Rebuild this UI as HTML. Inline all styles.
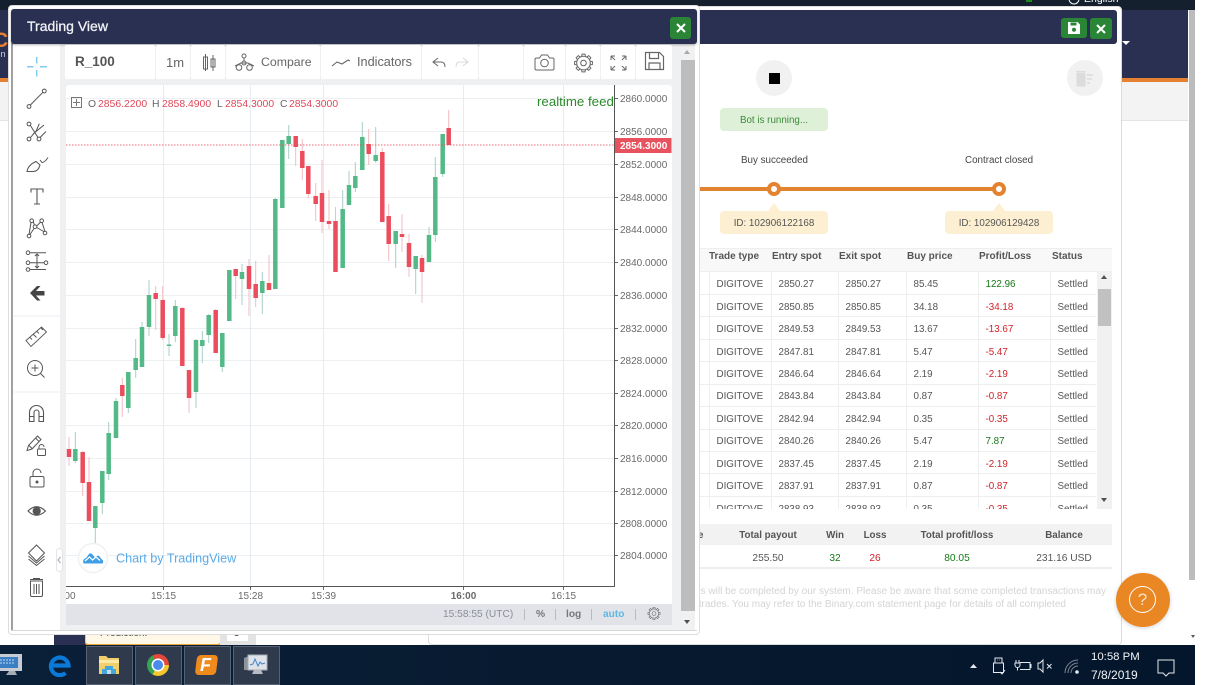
<!DOCTYPE html>
<html><head><meta charset="utf-8"><title>Trading View</title>
<style>
html,body{margin:0;padding:0;width:1219px;height:685px;overflow:hidden;background:#fff;font-family:"Liberation Sans",Arial,sans-serif}
#w{position:absolute;left:0;top:0;width:1219px;height:685px;overflow:hidden;filter:blur(.3px)}
.a{position:absolute}
.t{position:absolute;white-space:nowrap}
table{border-collapse:collapse;table-layout:fixed}
#tb td{height:22.45px;padding:3px 0 0 7px;font-size:9.8px;color:#555;border-bottom:1px solid #eee;border-right:1px solid #eee;box-sizing:border-box;white-space:nowrap;overflow:hidden}
#tb td.g,.g{color:#167a16}
#tb td.r,.r{color:#d0222a}
.seg{position:absolute;top:45px;height:34px;background:#fff;border-radius:2px}
.hd{position:absolute;top:251px;font-size:10px;font-weight:bold;color:#555;line-height:12px;white-space:nowrap}
.sm{position:absolute;font-size:10.2px;line-height:12px;white-space:nowrap;transform:translateX(-50%)}
.tk{position:absolute;top:646px;height:37px;width:45px;background:#2f3b4d;border:1px solid #566274}
</style></head><body><div id="w">

<!-- background page -->
<div class="a" style="left:0;top:0;width:1195px;height:10px;background:#14202e"></div>
<div class="a" style="left:0;top:10px;width:1188px;height:68px;background:#2a3052"></div>
<div class="a" style="left:0;top:78px;width:1188px;height:4px;background:#e58130"></div>
<div class="a" style="left:0;top:82px;width:1188px;height:38px;background:#f3f3f3;border-bottom:1px solid #e4e4e4"></div>
<div class="t" style="left:-7px;top:29px;font-size:21px;font-weight:bold;color:#e58130">C</div>
<div class="t" style="left:-6px;top:49px;font-size:9px;color:#cfd2dc">sin</div>
<div class="a" style="left:1189px;top:10px;width:6px;height:570px;background:#bcbcbc"></div>
<div class="a" style="left:1190.5px;top:635px;border-left:2.5px solid transparent;border-right:2.5px solid transparent;border-top:3px solid #555"></div>
<div class="a" style="left:1122px;top:41px;border-left:4px solid transparent;border-right:4px solid transparent;border-top:4px solid #fff"></div>
<div class="a" style="left:1026px;top:0;width:6px;height:2px;background:#1a8a1a"></div>
<svg class="a" style="left:1067px;top:0" width="14" height="5"><circle cx="7" cy="-1" r="5" fill="none" stroke="#fff"/></svg>
<div class="t" style="left:1084px;top:-7px;font-size:10.5px;color:#fff">English</div>

<!-- remnants under windows -->
<div class="a" style="left:54px;top:630px;width:32px;height:16px;background:#2a3052"></div>
<div class="a" style="left:85px;top:628px;width:134px;height:15px;background:#fff8e6;border:1px solid #f4c65c;border-bottom:2px solid #e7a53a;border-radius:0 0 4px 4px"></div>
<div class="t" style="left:100px;top:628px;font-size:10px;color:#444">Prediction:</div>
<div class="a" style="left:220px;top:628px;width:36px;height:17px;background:#e3e3e3"></div>
<div class="a" style="left:227px;top:628px;width:21px;height:13px;background:#fff"></div>
<div class="t" style="left:234px;top:628px;font-size:10px;color:#444">5</div>

<!-- BOT WINDOW -->
<div class="a" style="left:428px;top:6px;width:692px;height:637px;background:#fff;border:1px solid #dcdcdc;border-radius:4px"></div>
<div class="a" style="left:432px;top:10px;width:685px;height:34px;background:#2a3052;border-radius:3px"></div>
<div class="a" style="left:1061px;top:18px;width:26px;height:20px;background:#2a8636;border-radius:3px"></div>
<svg class="a" style="left:1067px;top:21px" width="14" height="14" viewBox="0 0 14 14"><path d="M1 1h9.500l2.500 2.500V13H1z" fill="#fff"/><rect x="3.500" y="1.500" width="6" height="3" fill="#2a8636"/><circle cx="7" cy="8.800" r="2" fill="#2a8636"/></svg>
<div class="a" style="left:1090px;top:18px;width:22px;height:21px;background:#2a8636;border-radius:3px"></div>
<svg class="a" style="left:1095px;top:23px" width="12" height="12"><path d="M2 2l8 8M10 2l-8 8" stroke="#fff" stroke-width="2"/></svg>

<div class="a" style="left:756px;top:60px;width:36px;height:36px;border-radius:50%;background:#f1f1f1"></div>
<div class="a" style="left:769px;top:73px;width:10.500px;height:11px;background:#000"></div>
<div class="a" style="left:1067px;top:60px;width:36px;height:36px;border-radius:50%;background:#f1f1f1"></div>
<svg class="a" style="left:1075px;top:70px" width="20" height="17"><path d="M2 3h8v13H2z M1 1.500h10" fill="#dcdcdc" stroke="#dcdcdc"/><path d="M12 5h6M12 9h5M12 13h3" stroke="#dcdcdc" stroke-width="1.500"/></svg>

<div class="a" style="left:720px;top:108px;width:108px;height:23px;background:#dff0d8;border-radius:4px;text-align:center;font-size:9.800px;line-height:25px;color:#3c8a3d">Bot is running...</div>
<div class="t" style="left:741px;top:155px;font-size:9.800px;line-height:12px;color:#444">Buy succeeded</div>
<div class="t" style="left:965px;top:155px;font-size:9.800px;line-height:12px;color:#444">Contract closed</div>
<div class="a" style="left:699px;top:187px;width:300px;height:4px;background:#e38330"></div>
<div class="a" style="left:767px;top:182px;width:6px;height:6px;border:4px solid #e38330;background:#fff;border-radius:50%"></div>
<div class="a" style="left:992px;top:182px;width:6px;height:6px;border:4px solid #e38330;background:#fff;border-radius:50%"></div>
<div class="a" style="left:720px;top:211px;width:108px;height:23px;background:#fdf0d2;border-radius:4px;text-align:center;font-size:9.800px;line-height:25px;color:#555">ID: 102906122168</div>
<div class="a" style="left:945px;top:211px;width:108px;height:23px;background:#fdf0d2;border-radius:4px;text-align:center;font-size:9.800px;line-height:25px;color:#555">ID: 102906129428</div>
<div class="a" style="left:768px;top:203px;border-left:6px solid transparent;border-right:6px solid transparent;border-bottom:8px solid #fdf0d2"></div>
<div class="a" style="left:993px;top:203px;border-left:6px solid transparent;border-right:6px solid transparent;border-bottom:8px solid #fdf0d2"></div>

<!-- trades table -->
<div class="a" style="left:697px;top:248px;width:415px;height:24px;background:#f8f8f8;border-bottom:1px solid #eee;border-top:1px solid #eee;box-sizing:border-box"></div>
<div class="hd" style="left:709px">Trade type</div>
<div class="hd" style="left:772px">Entry spot</div>
<div class="hd" style="left:839px">Exit spot</div>
<div class="hd" style="left:907px">Buy price</div>
<div class="hd" style="left:979px">Profit/Loss</div>
<div class="hd" style="left:1052px">Status</div>
<div class="a" style="left:697px;top:272px;width:399px;height:237px;overflow:hidden">
<table id="tb" style="width:399px">
<colgroup><col style="width:12px"><col style="width:62px"><col style="width:67px"><col style="width:68px"><col style="width:72px"><col style="width:72px"><col style="width:46px"></colgroup>
<tr><td></td><td>DIGITOVE</td><td>2850.27</td><td>2850.27</td><td>85.45</td><td class="g">122.96</td><td>Settled</td></tr>
<tr><td></td><td>DIGITOVE</td><td>2850.85</td><td>2850.85</td><td>34.18</td><td class="r">-34.18</td><td>Settled</td></tr>
<tr><td></td><td>DIGITOVE</td><td>2849.53</td><td>2849.53</td><td>13.67</td><td class="r">-13.67</td><td>Settled</td></tr>
<tr><td></td><td>DIGITOVE</td><td>2847.81</td><td>2847.81</td><td>5.47</td><td class="r">-5.47</td><td>Settled</td></tr>
<tr><td></td><td>DIGITOVE</td><td>2846.64</td><td>2846.64</td><td>2.19</td><td class="r">-2.19</td><td>Settled</td></tr>
<tr><td></td><td>DIGITOVE</td><td>2843.84</td><td>2843.84</td><td>0.87</td><td class="r">-0.87</td><td>Settled</td></tr>
<tr><td></td><td>DIGITOVE</td><td>2842.94</td><td>2842.94</td><td>0.35</td><td class="r">-0.35</td><td>Settled</td></tr>
<tr><td></td><td>DIGITOVE</td><td>2840.26</td><td>2840.26</td><td>5.47</td><td class="g">7.87</td><td>Settled</td></tr>
<tr><td></td><td>DIGITOVE</td><td>2837.45</td><td>2837.45</td><td>2.19</td><td class="r">-2.19</td><td>Settled</td></tr>
<tr><td></td><td>DIGITOVE</td><td>2837.91</td><td>2837.91</td><td>0.87</td><td class="r">-0.87</td><td>Settled</td></tr>
<tr><td></td><td>DIGITOVE</td><td>2838.93</td><td>2838.93</td><td>0.35</td><td class="r">-0.35</td><td>Settled</td></tr>
</table></div>
<div class="a" style="left:1097px;top:271px;width:15px;height:238px;background:#f1f1f1"></div>
<div class="a" style="left:1098px;top:289px;width:13px;height:37px;background:#c1c1c1"></div>
<div class="a" style="left:1101px;top:275px;border-left:3.500px solid transparent;border-right:3.500px solid transparent;border-bottom:4px solid #505050"></div>
<div class="a" style="left:1101px;top:498px;border-left:3.500px solid transparent;border-right:3.500px solid transparent;border-top:4px solid #505050"></div>

<!-- summary -->
<div class="a" style="left:697px;top:524px;width:415px;height:21px;background:#f2f2f2"></div>
<div class="a" style="left:697px;top:545px;width:415px;height:24px;border-bottom:2px solid #eee;box-sizing:border-box"></div>
<div class="sm" style="left:768px;top:530px;font-weight:bold;color:#555;font-size:9.800px">Total payout</div>
<div class="sm" style="left:835px;top:530px;font-weight:bold;color:#555;font-size:9.800px">Win</div>
<div class="sm" style="left:875px;top:530px;font-weight:bold;color:#555;font-size:9.800px">Loss</div>
<div class="sm" style="left:957px;top:530px;font-weight:bold;color:#555;font-size:9.800px">Total profit/loss</div>
<div class="sm" style="left:1064px;top:530px;font-weight:bold;color:#555;font-size:9.800px">Balance</div>
<div class="t" style="left:698px;top:530px;font-size:9.800px;line-height:12px;font-weight:bold;color:#555">e</div>
<div class="sm" style="left:768px;top:553px;color:#555">255.50</div>
<div class="sm g" style="left:835px;top:553px">32</div>
<div class="sm r" style="left:875px;top:553px">26</div>
<div class="sm g" style="left:957px;top:553px">80.05</div>
<div class="sm" style="left:1064px;top:553px;color:#555">231.16 USD</div>

<div class="a" style="left:699px;top:585px;width:412px;height:28px;overflow:hidden">
<div class="t" style="right:5px;top:1px;font-size:10.050px;line-height:12px;color:#d4d4d4">All trades will be completed by our system. Please be aware that some completed transactions may</div>
<div class="t" style="right:45px;top:14px;font-size:10.050px;line-height:12px;color:#d4d4d4">outstanding trades. You may refer to the Binary.com statement page for details of all completed</div>
</div>

<!-- help -->
<div class="a" style="left:1116px;top:573px;width:54px;height:54px;border-radius:50%;background:#e98724;box-shadow:0 1px 4px rgba(0,0,0,.18)"></div>
<div class="a" style="left:1129px;top:586px;width:25px;height:25px;border:1.500px solid #fff;border-radius:50%;color:#f8e2c8;text-align:center;font-size:17px;line-height:25px">?</div>

<!-- TRADING WINDOW -->
<div class="a" style="left:8px;top:5px;width:690px;height:628px;background:#fff;border:1px solid #ddd;border-radius:4px"></div>
<div class="a" style="left:11px;top:43px;width:2px;height:588px;background:#a0a0a0"></div>
<div class="a" style="left:11px;top:630px;width:686px;height:1px;background:#d8d8d8"></div>
<div class="a" style="left:60px;top:44px;width:621px;height:586px;background:#eff0f2"></div>
<div class="a" style="left:681px;top:44px;width:14px;height:586px;background:#f1f1f1"></div>
<div class="a" style="left:681px;top:60px;width:13.500px;height:551px;background:#bdbdbd"></div>
<div class="a" style="left:684px;top:50px;border-left:3.500px solid transparent;border-right:3.500px solid transparent;border-bottom:4px solid #a8a8a8"></div>
<div class="a" style="left:684px;top:620px;border-left:3.500px solid transparent;border-right:3.500px solid transparent;border-top:4px solid #505050"></div>

<div class="a" style="left:11px;top:9px;width:686px;height:34.500px;background:#2a3052;border-radius:3px 3px 3px 3px;box-shadow:0 1px 2px rgba(0,0,0,.3)"></div>
<div class="t" style="left:27px;top:18px;font-size:14px;line-height:17px;color:#f0f1f5;-webkit-text-stroke:.3px #f0f1f5">Trading View</div>
<div class="a" style="left:670px;top:17px;width:21px;height:22px;background:#2a8636;border-radius:3px"></div>
<svg class="a" style="left:675px;top:22px" width="12" height="12"><path d="M2 2l8 8M10 2l-8 8" stroke="#fff" stroke-width="2"/></svg>

<!-- top toolbar -->
<div class="seg" style="left:65px;width:90px"></div>
<div class="seg" style="left:156px;width:34px"></div>
<div class="seg" style="left:191px;width:34px"></div>
<div class="seg" style="left:226px;width:94px"></div>
<div class="seg" style="left:321px;width:100px"></div>
<div class="seg" style="left:422px;width:56px"></div>
<div class="seg" style="left:479px;width:44px"></div>
<div class="seg" style="left:524px;width:41px"></div>
<div class="seg" style="left:566px;width:34px"></div>
<div class="seg" style="left:601px;width:34px"></div>
<div class="seg" style="left:636px;width:36px"></div>
<div class="t" style="left:75px;top:54px;font-size:13.500px;line-height:16px;font-weight:bold;color:#555">R_100</div>
<div class="t" style="left:166px;top:55px;font-size:13px;line-height:16px;color:#666">1m</div>
<div class="t" style="left:261px;top:55px;font-size:12.300px;line-height:15px;color:#666">Compare</div>
<div class="t" style="left:357px;top:55px;font-size:12.700px;line-height:15px;color:#666">Indicators</div>
<svg class="a" style="left:0;top:0" width="700" height="85" fill="none" stroke="#666" stroke-width="1">
<defs><g id="gr"><circle r="6.800"/><g id="th"><path d="M6.700-1.900L8.900-1.500V1.500L6.700 1.900"/></g><use href="#th" transform="rotate(45)"/><use href="#th" transform="rotate(90)"/><use href="#th" transform="rotate(135)"/><use href="#th" transform="rotate(180)"/><use href="#th" transform="rotate(225)"/><use href="#th" transform="rotate(270)"/><use href="#th" transform="rotate(315)"/><circle r="2.800"/></g></defs>
<path d="M205.500 54v17M203.500 57h4v12h-4zM213 55v16M211 59h4v8h-4z"/>
<circle cx="244" cy="56" r="2"/><circle cx="244" cy="63" r="2"/><circle cx="239" cy="67.500" r="2.800"/><circle cx="249.500" cy="67.500" r="2.800"/><path d="M244 58v3M235 66l6-3h7l6 3"/>
<path d="M332 66l5-4 5 2 6-4 2 1" stroke-width="1.100"/>
<path d="M438 58l-5 4 5 4M433 62h8c3 0 4 2 4 5"/>
<path d="M463 58l5 4-5 4M468 62h-8c-3 0-4 2-4 5" stroke="#d6d8db"/>
<path d="M536.500 58h3l2-3h6l2 3h3a1.500 1.500 0 0 1 1.500 1.500v9a1.500 1.500 0 0 1-1.500 1.500h-16a1.500 1.500 0 0 1-1.500-1.500v-9a1.500 1.500 0 0 1 1.500-1.500z"/><circle cx="544.500" cy="63" r="3.800"/>
<use href="#gr" transform="translate(583.500 63)"/>
<path d="M611 56h4M611 56v4M611 56l4 4M626 56h-4M626 56v4M626 56l-4 4M611 70h4M611 70v-4M611 70l4-4M626 70h-4M626 70v-4M626 70l-4-4"/>
<path d="M645.500 52.500h14l4 4v13h-18zM649.500 52.500v6h9v-6M649 69.500v-6.500h11v6.500" stroke-width="1.200"/>
</svg>

<!-- left toolbar -->
<svg class="a" style="left:0;top:0" width="66" height="630" fill="none" stroke="#555" stroke-width="1">
<path d="M14 316h46M14 392h46" stroke="#eceef0"/>
<path d="M36.700 57v6.500M36.700 70v6.500M27 66.700h6.500M40 66.700h7" stroke="#7ecbee" stroke-width="1.500"/>
<circle cx="29" cy="106.500" r="1.900"/><circle cx="44.300" cy="91" r="1.900"/><path d="M30.400 105l12.500-12.700"/>
<circle cx="29" cy="139" r="1.900"/><circle cx="39" cy="139" r="1.900"/><circle cx="29" cy="124" r="1.900"/><path d="M30.400 125.500L38 137.500M30.300 137.700l6-7 3-7M33 134l11-9M40 137.500l6-6"/>
<path d="M27 171.500c.5-4 4-8 9-10l4 3.500c-1 4-3 6.500-7 6.500zM40 160l2 2.500c2 0 4-2 6-5"/>
<path d="M31 192.500v-3.500h12v3.500M37 189v15M34 204h6" stroke-width="1.100"/>
<circle cx="31.700" cy="220.700" r="1.800"/><circle cx="41.700" cy="220.700" r="1.800"/><circle cx="29" cy="236" r="1.800"/><circle cx="45" cy="233" r="1.800"/><circle cx="35" cy="226.700" r="1.800"/>
<path d="M31 222.500l-2 12M33 221.500l1.500 3.500M36.700 226l4-4M36.700 227.500l7 4M42 222.500l3 9M30 234.500l4-6"/>
<circle cx="28" cy="252.700" r="1.800"/><circle cx="28" cy="262.700" r="1.800"/><circle cx="46" cy="262.700" r="1.800"/><circle cx="28" cy="269.500" r="1.800"/>
<path d="M30 252.700h16M30 262.700h14M30 269.500h16M37 254v14M35 256l2-2 2 2M35 266l2 2 2-2"/>
<path d="M30 293l7-7h3.500l-4.500 5h8.500v4.500H36l4.500 5H37z" fill="#444" stroke="none"/>
<path d="M26 340.500L41.500 327l5 5L31 346.500zM30 337.500l2 2M33.500 334.500l3 3M37 331.500l2 2M41 328l2 2" stroke-width=".9"/>
<circle cx="35" cy="368" r="7.500"/><path d="M40.500 373.500l4 4M31.500 368h7M35 364.500v7"/>
<path d="M29.500 421.500v-9a7 7 0 0 1 14 0v9h-4.500v-9a2.500 2.500 0 0 0-5 0v9zM29.500 416.500h4.500M39 416.500h4.500" stroke-width="1.100"/>
<path d="M27 450.500l1.500-5 9-9.500 3.500 3.500-9 9.500zM35.500 438l3.500 3.500M29 445.500l3 3"/><rect x="37.500" y="449" width="8" height="6.500" rx="1"/><path d="M39 449v-2a2.500 2.500 0 0 1 5 0"/>
<rect x="30" y="476.500" width="14" height="10.500" rx="1.500"/><path d="M33 476.500V473a4 4 0 0 1 8 0"/><circle cx="37" cy="482" r="1" fill="#555"/>
<path d="M28 511q8.500-8.500 17.500 0q-9 8.500-17.500 0z" stroke-width="1.100"/><circle cx="36.700" cy="511" r="3.600" fill="#555"/>
<path d="M28.500 553l8-8 8 8-8 8zM28.500 556l8 7 8-7M28.500 559l8 6.500 8-6.500" stroke-width="1"/>
<path d="M30.500 581h12v14a1.500 1.500 0 0 1-1.500 1.500h-9a1.500 1.500 0 0 1-1.500-1.500zM30 579.500h13M33 578.500h7M34 584v10M36.500 584v10M39 584v10" stroke-width="1"/>
</svg>
<div class="a" style="left:56px;top:548px;width:7px;height:24px;background:#fff;border:1px solid #e3e5e8;border-radius:4px;box-sizing:border-box"></div>
<svg class="a" style="left:57px;top:556px" width="5" height="8"><path d="M3.500 1L1 4l2.500 3" fill="none" stroke="#aaa"/></svg>

<!-- chart -->
<div class="a" style="left:66px;top:85px;width:606px;height:519px;background:#fff;border-radius:3px 3px 0 0"></div>
<svg class="a" style="left:66px;top:85px" width="606" height="519" viewBox="66 85 606 519" font-family="Liberation Sans,Arial,sans-serif">
<g stroke="#ecf0f3" stroke-width="1" fill="none">
<path d="M66 98.500H614M66 131.500H614M66 164.500H614M66 197.500H614M66 229.500H614M66 262.500H614M66 295.500H614M66 328.500H614M66 360.500H614M66 393.500H614M66 425.500H614M66 458.500H614M66 491.500H614M66 523.500H614M66 555.500H614"/>
<path d="M163.500 85V586M250.500 85V586M323.500 85V586M463.500 85V586M563.500 85V586" stroke="#e6edf2"/>
</g>
<path fill="none" stroke-width="1" stroke="#f2bcc2" d="M69 437V466M82.700 451V496M89 457V521M122.300 378V417M155.700 286V330M162.700 286V340M182.300 307V366M189 370V413M215.700 309V353M235.700 269V299M249 259V316M255.700 261V307M269 255V290M295.700 136V166M302.300 139V180M308.300 166V198M315.700 183V221M322 160V233M329 190V229M335.500 207V272M368.700 129V165M382.300 148V222M388.700 204V261M402 214V252M409 234V277M422 255V303M448.700 110V145"/>
<path fill="none" stroke-width="1" stroke="#a9cfc6" d="M75.300 432V463M95.300 506V544M102.300 471V514M108.700 422V480M116 398V438M128.300 372V413M135.700 339V378M142 322V367M149 280V336M169 334V356M175.300 300V342M196 339V408M202.300 331V363M208.700 314V343M222.300 333V372M242 264V305M262.300 272V314M275.300 198V289M288.700 125V159M342.700 190V268M349 171V205M355.300 162V192M362.300 122V170M375.700 127V163M395.700 231V268M415.700 256V294M429 227V262M435.300 157V242M442.700 134V177"/>
<path fill="none" stroke="#53b987" stroke-width="4.500" d="M75.300 449V461M95.300 506V528M102.300 471V503M108.700 433V474M116 401V438M128.300 372V408M135.700 358V370M142 327V367M149 295V327M175.300 306V336M196 340V392M202.300 340V346M208.700 315V335M222.300 333V367M229.300 270V321M242 272V279M262.300 281V293M275.300 199V289M282.300 140V208M288.700 136V144M342.700 209V268M349 185V205M355.300 176V188M362.300 137V170M375.700 155V161M395.700 231V244M415.700 256V269M429 235V262M435.300 177V235M442.700 134V174"/>
<path fill="none" stroke="#53b987" stroke-width="4.500" d="M169 344.500V346"/>
<path fill="none" stroke="#eb4d5c" stroke-width="4.500" d="M69 449V457M82.700 452V483M89 482V521M122.300 385V396M155.700 293V299M162.700 300V338M182.300 308V366M189 370V398M215.700 310V353M235.700 269V276M249 266V289M255.700 284V298M269 283V290M295.700 136V147M302.300 151V168M308.300 166V194M315.700 196V204M322 193V222M329 221V224M335.500 221V272M368.700 144V154M382.300 152V222M388.700 216V244M402 234V237M409 243V267M422 258V272M448.700 128V145"/>
<path d="M66 145H614" stroke="#eb4d5c" stroke-width="1" stroke-dasharray="1.500 1.500" fill="none" opacity=".85"/>
<!-- axes -->
<path d="M614.500 85V586.500H66" stroke="#555" stroke-width="1" fill="none"/>
<path d="M615 98.500h3M615 131.500h3M615 164.500h3M615 197.500h3M615 229.500h3M615 262.500h3M615 295.500h3M615 328.500h3M615 360.500h3M615 393.500h3M615 425.500h3M615 458.500h3M615 491.500h3M615 523.500h3M615 555.500h3M163.500 587v3M250.500 587v3M323.500 587v3M463.500 587v3M563.500 587v3" stroke="#666" fill="none"/>
<rect x="615" y="138" width="56.500" height="15" fill="#e8525f"/>
<g font-size="10" fill="#6a6a6a">
<text x="620" y="102">2860.0000</text><text x="620" y="135">2856.0000</text><text x="620" y="168">2852.0000</text><text x="620" y="201">2848.0000</text><text x="620" y="233">2844.0000</text><text x="620" y="266">2840.0000</text><text x="620" y="299">2836.0000</text><text x="620" y="332">2832.0000</text><text x="620" y="364">2828.0000</text><text x="620" y="397">2824.0000</text><text x="620" y="429">2820.0000</text><text x="620" y="462">2816.0000</text><text x="620" y="495">2812.0000</text><text x="620" y="527">2808.0000</text><text x="620" y="559">2804.0000</text>
</g>
<text x="620" y="149" font-size="10" font-weight="bold" fill="#fff">2854.3000</text>
<g font-size="10" fill="#6a6a6a" text-anchor="middle">
<text x="163.500" y="599">15:15</text><text x="250.500" y="599">15:28</text><text x="323.500" y="599">15:39</text><text x="463.500" y="599" font-weight="bold">16:00</text><text x="563.500" y="599">16:15</text><text x="63" y="599">15:00</text>
</g>
<!-- OHLC -->
<rect x="71.500" y="97.500" width="10" height="10" fill="none" stroke="#777"/><path d="M76.500 99v7M73 102.500h7" stroke="#777"/>
<g font-size="10.400"><text x="88" y="107" fill="#666">O</text><text x="98" y="107" fill="#e0485a">2856.2200</text>
<text x="152" y="107" fill="#666">H</text><text x="162" y="107" fill="#e0485a">2858.4900</text>
<text x="217" y="107" fill="#666">L</text><text x="225" y="107" fill="#e0485a">2854.3000</text>
<text x="280" y="107" fill="#666">C</text><text x="289" y="107" fill="#e0485a">2854.3000</text></g>
<text x="537" y="106" font-size="13.300" fill="#2a8a2a">realtime feed</text>
<!-- logo -->
<circle cx="93" cy="558" r="14.500" fill="#fff" stroke="#eef1f4" stroke-width="1.500"/>
<path d="M83.500 563.500c-1-3 .5-5 2.500-5.500l3-4c1-1 2-1 3 0l3 3.500 2-1.500c1-.5 2-.5 2.500.5l2.500 3c1.500 1 1.500 3 .5 4z" fill="#3f9fe5"/><path d="M85 561l4.500-4 3 3 3.500-3 4 3.500" fill="none" stroke="#fff" stroke-width="1.200"/>
<text x="116" y="562.500" font-size="12.600" fill="#5aa9e6">Chart by TradingView</text>
</svg>
<div class="a" style="left:60px;top:586px;width:6px;height:18px;background:#eff0f2"></div>

<!-- status bar -->
<div class="a" style="left:66px;top:604px;width:606px;height:21px;background:#e1e3e8"></div>
<div class="t" style="left:443px;top:609px;font-size:10.200px;line-height:12px;color:#8a8e94">15:58:55 (UTC)</div>
<div class="t" style="left:536px;top:609px;font-size:10.200px;line-height:12px;color:#777;font-weight:bold">%</div>
<div class="t" style="left:566px;top:609px;font-size:10.200px;line-height:12px;color:#777;font-weight:bold">log</div>
<div class="t" style="left:603px;top:609px;font-size:10.200px;line-height:12px;color:#5cb8e5;font-weight:bold">auto</div>
<svg class="a" style="left:515px;top:604px" width="155" height="21" fill="none" stroke="#777"><path d="M9.500 5v11M40.500 5v11M76.500 5v11M120.500 5v11" stroke="#b8bbc0"/><use href="#gr" transform="translate(139 9.500) scale(.68)"/></svg>

<!-- TASKBAR -->
<div class="a" style="left:0;top:645px;width:1195px;height:40px;background:linear-gradient(90deg,#0a2038 0%,#071a30 45%,#04162c 100%)"></div>
<div class="tk" style="left:86px"></div><div class="tk" style="left:135px"></div><div class="tk" style="left:184px"></div><div class="tk" style="left:233px"></div>
<!-- left monitor -->
<svg class="a" style="left:0;top:650px" width="24" height="30"><path d="M0 4h22v17H0z" fill="#c7ccd4"/><path d="M0 7h18v11H0z" fill="#3a7fc4"/><path d="M0 10h14M0 13h15" stroke="#bcd9f3" stroke-dasharray="2 1"/><path d="M9 21h6l2 4H6z" fill="#a6acb5"/></svg>
<!-- edge -->
<svg class="a" style="left:48px;top:653px" width="24" height="24"><path d="M4 12.500h16.500a8.800 8.800 0 1 0-3 7.500" fill="none" stroke="#0a79d8" stroke-width="4.200"/></svg>
<!-- explorer -->
<svg class="a" style="left:97px;top:654px" width="24" height="22"><path d="M2 2h7l2 2h11v16H2z" fill="#f2cf6b"/><path d="M2 6h20v3H2z" fill="#fbe9a6"/><path d="M8 12h8v3h3v5H5v-5h3z" fill="#43a6dd"/><path d="M10 16h4v4h-4z" fill="#bfe3f6"/></svg>
<!-- chrome -->
<div class="a" style="left:147px;top:654px;width:22px;height:22px;border-radius:50%;background:conic-gradient(from 0deg,#e5463a 0 90deg,#f6c62e 90deg 210deg,#34a353 210deg 330deg,#e5463a 330deg 360deg)"></div>
<div class="a" style="left:153px;top:660px;width:10px;height:10px;border-radius:50%;background:#4b8bea;box-shadow:0 0 0 1.500px #fff"></div>
<!-- F -->
<div class="a" style="left:196px;top:655px;width:21px;height:20px;background:#ef8a1d;border-radius:4px;transform:skewX(-7deg)"></div>
<div class="t" style="left:200px;top:655px;font-size:18px;line-height:20px;font-weight:bold;font-style:italic;color:#fff">F</div>
<!-- monitor -->
<svg class="a" style="left:244px;top:653px" width="25" height="24"><path d="M0 5l5-2v14H0z" fill="#8d939c"/><path d="M4 2h19v15H4z" fill="#dfe3e8" stroke="#a7adb6"/><path d="M6 12l3-1 2-5 3 7 2-4 2 2 3-1" fill="none" stroke="#3f87cf"/><path d="M10 17h7l2 4H8z" fill="#b7bcc4"/></svg>
<!-- tray -->
<svg class="a" style="left:965px;top:650px" width="215" height="32" fill="none" stroke="#e6e9ee" stroke-width="1">
<path d="M5 18l3.500-4 3.500 4z" fill="#e6e9ee" stroke="none"/>
<path d="M30 13V8h7v5M28.500 13h10v9.500h-10zM32 10h.5M34.500 10h.5M35 22l2 2 3-4"/>
<path d="M51 10v3M54 10v3M50 13h5v2a2.500 2.500 0 0 1-5 0zM52.500 17.500v3M55 12.500h10v7H55M65 14.500h1v3h-1z"/>
<path d="M73 13h2l3-3v12l-3-3h-2zM82 14l4.500 4.500M86.500 14L82 18.500"/>
<path d="M100 23a13 13 0 0 1 13-13M103 23a10 10 0 0 1 10-10M106 23a7 7 0 0 1 7-7" stroke="#7d8794"/><circle cx="112" cy="22" r="1.300" fill="#e6e9ee"/>
<path d="M193 10h16v13h-5l-3 3-3-3h-5z"/>
</svg>
<div class="t" style="left:1091px;top:650px;font-size:11.400px;line-height:15px;color:#f2f4f7">10:58 PM</div>
<div class="t" style="left:1091px;top:668px;font-size:12px;line-height:15px;color:#f2f4f7">7/8/2019</div>
</div></body></html>
